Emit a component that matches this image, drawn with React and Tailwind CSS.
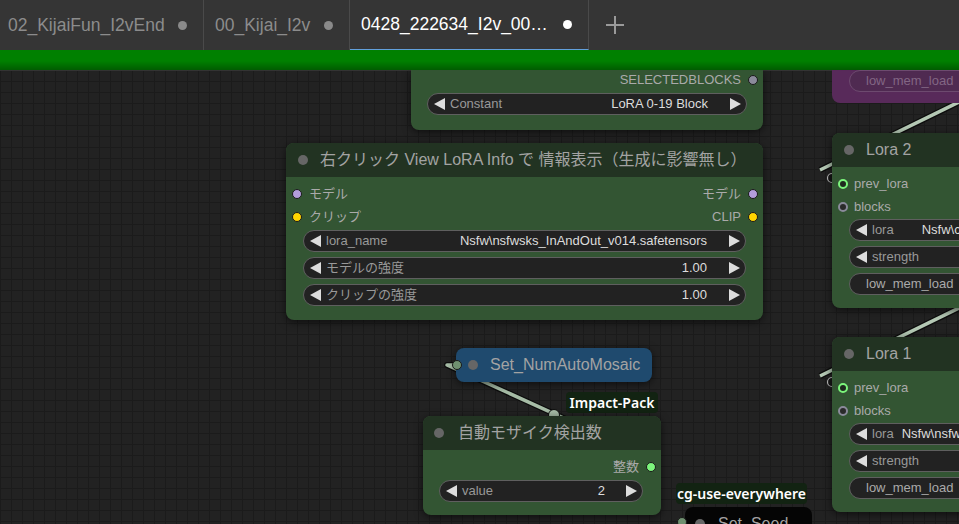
import React from "react";

const FONT = "font-['Liberation_Sans','Noto_Sans_CJK_JP',sans-serif]";

function Tri({ dir }) {
  return (
    <svg width="11" height="12" viewBox="0 0 11 12" className="shrink-0">
      <polygon points={dir === "l" ? "11,0 11,12 0,6" : "0,0 0,12 11,6"} fill="#dddddd" />
    </svg>
  );
}

function Widget({ label, value, arrows = true, valueClass = "ml-auto mr-[22px]" }) {
  return (
    <div className="flex h-[22px] shrink-0 items-center overflow-hidden whitespace-nowrap rounded-full border border-[#5f5f5f] bg-[#222222] pl-[6px] pr-[5px] text-[13px]">
      {arrows ? <Tri dir="l" /> : <span className="w-[10px]" />}
      <span className="ml-[5px] text-[#999999]">{label}</span>
      {value != null && <span className={"text-[#dddddd] " + valueClass}>{value}</span>}
      {arrows && <Tri dir="r" />}
    </div>
  );
}

function Title({ text, pl = "pl-[12px]", gap = "ml-[12px]" }) {
  return (
    <div className={"flex h-[34px] shrink-0 items-center rounded-t-[8px] bg-[#223322] text-[16px] text-[#a3a3a3] " + pl}>
      <span className="h-[10px] w-[10px] shrink-0 rounded-full bg-[#666666]" />
      <span className={"whitespace-nowrap " + gap}>{text}</span>
    </div>
  );
}

function Slot({ label, color, right }) {
  const dot = <span className={"h-[10px] w-[10px] shrink-0 rounded-full border border-[#1a1a1a] " + color} />;
  if (right) {
    return (
      <div className="flex h-[23px] items-center justify-end pr-[5px] text-[13px] text-[#aaaaaa]">
        <span className="mr-[7px]">{label}</span>
        {dot}
      </div>
    );
  }
  return (
    <div className="flex h-[23px] items-center pl-[6px] text-[13px] text-[#aaaaaa]">
      {dot}
      <span className="ml-[7px]">{label}</span>
    </div>
  );
}

function LoraNode({ name, top, loraValue, valueMl }) {
  return (
    <div className={"absolute left-[832px] flex w-[300px] flex-col rounded-[8px] bg-[#335533] shadow-[0_2px_8px_rgba(0,0,0,0.6)] " + top}>
      <Title text={name} />
      <div className="flex flex-col pb-[13px] pt-[5px]">
        <div className="flex h-[23px] items-center pl-[6px] text-[13px] text-[#aaaaaa]">
          <span className="h-[10px] w-[10px] shrink-0 rounded-full border-[2.5px] border-[#7cf57c] bg-[#1e2a1e]" />
          <span className="ml-[6px]">prev_lora</span>
        </div>
        <div className="flex h-[23px] items-center pl-[6px] text-[13px] text-[#aaaaaa]">
          <span className="h-[10px] w-[10px] shrink-0 rounded-full border-[2.5px] border-[#8a8a9a] bg-[#2a2a2a]" />
          <span className="ml-[6px]">blocks</span>
        </div>
        <div className="mt-[1px] flex flex-col gap-[5px] pl-[17px]">
          <Widget label="lora" value={loraValue} valueClass={valueMl} />
          <Widget label="strength" value="1.00" />
          <div className="flex h-[22px] items-center rounded-full border border-[#5f5f5f] bg-[#222222] pl-[16px] text-[13px] text-[#aaaaaa]">
            low_mem_load
          </div>
        </div>
      </div>
    </div>
  );
}

export default function App() {
  return (
    <div className={"flex h-[524px] w-[959px] flex-col overflow-hidden bg-[#222222] " + FONT}>
      {/* Tab bar */}
      <div className="flex h-[50px] shrink-0 items-stretch bg-[#353535] text-[17.5px]">
        <div className="flex w-[204px] items-center justify-between border-r border-[#4a4a4a] pl-[8px] pr-[16px] text-[#8c8c8c]">
          <span>02_KijaiFun_I2vEnd</span>
          <span className="h-[9px] w-[9px] rounded-full bg-[#8a8a8a]" />
        </div>
        <div className="flex w-[146px] items-center justify-between border-r border-[#4a4a4a] pl-[11px] pr-[16px] text-[#8c8c8c]">
          <span>00_Kijai_I2v</span>
          <span className="h-[9px] w-[9px] rounded-full bg-[#8a8a8a]" />
        </div>
        <div className="flex w-[239px] items-center justify-between border-b border-r border-b-[#62a0dc] border-r-[#4a4a4a] pl-[11px] pr-[16px] text-white">
          <span>0428_222634_I2v_00…</span>
          <span className="h-[9px] w-[9px] rounded-full bg-white" />
        </div>
        <div className="flex w-[52px] items-center justify-center">
          <svg width="20" height="20" viewBox="0 0 20 20">
            <path d="M10 1 V19 M1 10 H19" stroke="#9a9a9a" strokeWidth="2" />
          </svg>
        </div>
      </div>

      {/* green progress bar */}
      <div className="h-[20px] shrink-0 bg-[linear-gradient(#008000_55%,#005c00)]" />

      {/* Canvas */}
      <div className="relative flex-1 overflow-hidden bg-[#222222] bg-[linear-gradient(#1b1b1b_1px,transparent_1px),linear-gradient(90deg,#1b1b1b_1px,transparent_1px)] bg-[size:11px_11px]">
        <div className="absolute left-0 right-0 top-0 h-[1px] bg-[#333333]" />

        {/* links */}
        <svg className="absolute left-0 top-0" width="959" height="454">
          <g fill="none" strokeLinejoin="round">
            <polyline points="457,295 447,295 660,392" stroke="#0c0c0c" strokeWidth="6" />
            <polyline points="457,295 447,295 660,392" stroke="#a6bca6" strokeWidth="3.5" />
            <line x1="1000" y1="12" x2="820" y2="100" stroke="#0c0c0c" strokeWidth="6" />
            <line x1="1000" y1="12" x2="820" y2="100" stroke="#b4c8b4" strokeWidth="3.5" />
            <line x1="1000" y1="218" x2="820" y2="306" stroke="#0c0c0c" strokeWidth="6" />
            <line x1="1000" y1="218" x2="820" y2="306" stroke="#b4c8b4" strokeWidth="3.5" />
          </g>
          <circle cx="554" cy="345" r="5.5" fill="#a6bca6" stroke="#0c0c0c" strokeWidth="1" />
          <circle cx="832" cy="108" r="4.5" fill="#161616" stroke="#bbbbbb" strokeWidth="1.2" />
          <circle cx="832" cy="312" r="4.5" fill="#161616" stroke="#bbbbbb" strokeWidth="1.2" />
        </svg>

        {/* Top partial node */}
        <div className="absolute left-[411px] top-0 flex w-[352px] flex-col rounded-b-[8px] bg-[#335533] pb-[15px] shadow-[0_2px_8px_rgba(0,0,0,0.6)]">
          <div className="flex h-[20px] items-center justify-end pr-[5px] text-[13px] text-[#aaaaaa]">
            <span className="mr-[7px]">SELECTEDBLOCKS</span>
            <span className="h-[10px] w-[10px] rounded-full border border-[#1a1a1a] bg-[#8a8a9a]" />
          </div>
          <div className="mt-[3px] px-[16px]">
            <Widget label="Constant" value="LoRA 0-19 Block" />
          </div>
        </div>

        {/* Purple muted node */}
        <div className="absolute left-[832px] top-[-10px] w-[300px] rounded-b-[8px] bg-[#582a5a] pb-[11px] pl-[17px] pt-[10px]">
          <div className="flex h-[22px] items-center rounded-full border border-[#6d4a6f] bg-[#4f2a51] pl-[16px] text-[13px] text-[#826684]">
            low_mem_load
          </div>
        </div>

        {/* Main LoRA loader node */}
        <div className="absolute left-[286px] top-[73px] flex w-[477px] flex-col rounded-[8px] bg-[#335533] shadow-[0_2px_8px_rgba(0,0,0,0.6)]">
          <Title text="右クリック View LoRA Info で 情報表示（生成に影響無し）" />
          <div className="flex flex-col pb-[14px] pt-[5px]">
            <div className="flex justify-between">
              <Slot label="モデル" color="bg-[#b39ddb]" />
              <Slot label="モデル" color="bg-[#b39ddb]" right />
            </div>
            <div className="flex justify-between">
              <Slot label="クリップ" color="bg-[#ffd500]" />
              <Slot label="CLIP" color="bg-[#ffd500]" right />
            </div>
            <div className="mt-[2px] flex flex-col gap-[5px] px-[17px]">
              <Widget label="lora_name" value="Nsfw\nsfwsks_InAndOut_v014.safetensors" />
              <Widget label="モデルの強度" value="1.00" />
              <Widget label="クリップの強度" value="1.00" />
            </div>
          </div>
        </div>

        {/* Lora nodes */}
        <LoraNode name="Lora 2" top="top-[63px]" loraValue="Nsfw\cumshot_v1.safetensors" valueMl="ml-[28px]" />
        <LoraNode name="Lora 1" top="top-[267px]" loraValue="Nsfw\nsfwsks_InAndOut_v014.safetensors" valueMl="ml-[8px]" />

        {/* Set_NumAutoMosaic */}
        <div className="absolute left-[456px] top-[278px] flex h-[34px] w-[196px] items-center rounded-[8px] bg-[#1f4a6e] pl-[12px] text-[16px] text-[#a3a3a3] shadow-[0_2px_8px_rgba(0,0,0,0.6)]">
          <span className="h-[10px] w-[10px] shrink-0 rounded-full bg-[#666666]" />
          <span className="ml-[12px]">Set_NumAutoMosaic</span>
        </div>
        <div className="absolute left-[452px] top-[290px] h-[10px] w-[10px] rounded-full border border-[#1a1a1a] bg-[#6f9070]" />

        {/* Impact-Pack badge */}
        <div className="absolute left-[566px] top-[322px] flex h-[21px] w-[92px] items-center justify-center rounded-[4px] bg-[#122312] font-['Noto_Sans',sans-serif] text-[14px] font-semibold text-white">
          Impact-Pack
        </div>

        {/* 自動モザイク検出数 */}
        <div className="absolute left-[423px] top-[346px] flex w-[238px] flex-col rounded-[8px] bg-[#335533] shadow-[0_2px_8px_rgba(0,0,0,0.6)]">
          <Title text="自動モザイク検出数" pl="pl-[11px]" gap="ml-[14px]" />
          <div className="flex flex-col pb-[13px] pt-[5px]">
            <div className="flex h-[23px] items-center justify-end pr-[5px] text-[13px] text-[#aaaaaa]">
              <span className="mr-[7px]">整数</span>
              <span className="h-[10px] w-[10px] rounded-full border border-[#1a1a1a] bg-[#7cf57c]" />
            </div>
            <div className="mt-[2px] pl-[16px] pr-[18px]">
              <Widget label="value" value="2" valueClass="ml-auto mr-[21px]" />
            </div>
          </div>
        </div>

        {/* cg-use-everywhere badge */}
        <div className="absolute left-[676px] top-[413px] flex h-[21px] w-[131px] items-center justify-center rounded-[4px] bg-[#122312] font-['Noto_Sans',sans-serif] text-[14px] font-semibold text-white">
          cg-use-everywhere
        </div>

        {/* Set_Seed */}
        <div className="absolute left-[685px] top-[437px] flex h-[34px] w-[127px] items-center rounded-[8px] bg-[#050505] pl-[10px] text-[16px] text-[#a3a3a3]">
          <span className="h-[10px] w-[10px] shrink-0 rounded-full bg-[#666666]" />
          <span className="ml-[13px]">Set_Seed</span>
        </div>
        <div className="absolute left-[677px] top-[447px] h-[10px] w-[10px] rounded-full border border-[#1a1a1a] bg-[#6f9070]" />
      </div>
    </div>
  );
}
